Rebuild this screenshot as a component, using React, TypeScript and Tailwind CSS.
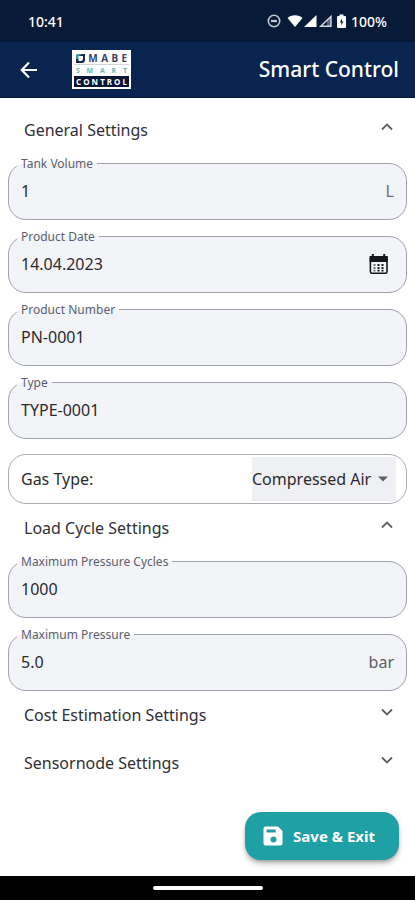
import React, { useState } from 'react';

const initialSections = {
  general: true,
  loadCycle: true,
  cost: false,
  sensornode: false,
};

type SectionKey = keyof typeof initialSections;

const StatusIcons = () => (
  <svg className="h-4 w-20" viewBox="0 0 80 16" fill="none" aria-hidden="true">
    {/* do not disturb */}
    <circle cx="7" cy="8" r="5.7" stroke="#c3c8d1" strokeWidth="1.6" />
    <path d="M4 8h6" stroke="#c3c8d1" strokeWidth="2.2" />
    {/* wifi */}
    <path d="M20.500 5C22.500 3 24.800 2.200 28 2.200S33.500 3 35.500 5L28 14z" fill="#fff" />
    {/* signal */}
    <path d="M49.500 2v12H37z" fill="#fff" />
    <path d="M64 3.500v9.800H53.700z" stroke="#d5d9e0" strokeWidth="1.400" />
    <path d="M60 7.500l4-4v9.800h-4z" fill="#d5d9e0" fillOpacity="0.400" />
    {/* battery */}
    <path d="M72.500 1.500h4V3H78a1 1 0 0 1 1 1v10a1 1 0 0 1-1 1h-7a1 1 0 0 1-1-1V4a1 1 0 0 1 1-1h1.500z" fill="#fff" />
    <path d="M75 5.500L72.800 9.200h1.500v3l2.200-3.800H75z" fill="#071b38" />
  </svg>
);

const BackIcon = () => (
  <svg className="h-6 w-6" viewBox="0 0 24 24" fill="none" stroke="#fff" strokeWidth="2.2" aria-hidden="true">
    <path d="M21 12H6M13 4.500L5.800 12l7.200 7.500" />
  </svg>
);

const ChevronIcon = ({ open }: { open: boolean }) => (
  <svg className="mb-1.5 h-6 w-6" viewBox="0 0 24 24" fill="none" stroke="#5f6166" strokeWidth="1.8" aria-hidden="true">
    <path d={open ? 'M7 14.500l5-5 5 5' : 'M7 9.500l5 5 5-5'} />
  </svg>
);

const CalendarIcon = () => (
  <svg className="h-6 w-6" viewBox="0 0 24 24" aria-hidden="true">
    <path d="M6.800 2v3M18.200 2v3" stroke="#16181d" strokeWidth="2" />
    <rect x="4.400" y="4.700" width="16.600" height="16.600" rx="1.500" fill="#f3f4f7" stroke="#16181d" strokeWidth="1.600" />
    <path d="M3.600 4h18.200v6H3.600z" fill="#16181d" />
    <g fill="#16181d">
      <path d="M11.500 12h2v2h-2zM15.500 12h2v2h-2zM11.500 14.900h2v2h-2zM15.500 14.900h2v2h-2zM11.500 17.700h2v1.700h-2zM15.500 17.700h2v1.700h-2z" />
      <path d="M7.500 12h2v2h-2zM7.500 14.900h2v2h-2zM7.500 17.700h2v1.700h-2z" fillOpacity="0.600" />
    </g>
  </svg>
);

const SaveIcon = () => (
  <svg className="h-6 w-6" viewBox="0 0 24 24" aria-hidden="true">
    <path
      d="M4.500 2.500H17L21.500 7V19.500a2 2 0 0 1-2 2h-15a2 2 0 0 1-2-2V4.500a2 2 0 0 1 2-2z"
      fill="#fff"
    />
    <path d="M5.500 5.500h9.200v3H5.500z" fill="#1fa0a5" />
    <circle cx="12.500" cy="15.500" r="3" fill="#1fa0a5" />
  </svg>
);

const LogoLine = ({ text }: { text: string }) => (
  <>
    {text.split('').map((letter, idx) => (
      <span key={idx}>{letter}</span>
    ))}
  </>
);

const Logo = () => (
  <div className="flex w-[59px] flex-col bg-white p-0.5 font-bold" role="img" aria-label="MABE Smart Control">
    <div className="flex h-3 items-center justify-between px-0.5 text-[10px] leading-3 text-[#3b4468]">
      <svg className="h-[9px] w-[9px]" viewBox="0 0 9 9" aria-hidden="true">
        <path d="M1.500 0H9v7L7 9H0V1.500z" fill="#172c52" />
        <path d="M0 5V1.500L1.500 0H6L3 2v3z" fill="#3a9a9c" />
        <path d="M2.500 2H7v3.500L5.500 7h-3z" fill="#fff" />
      </svg>
      <LogoLine text="MABE" />
    </div>
    <div className="flex h-3 items-center justify-between border-t border-gray-300 px-0.5 text-[7px] leading-3 text-[#68b9b5]">
      <LogoLine text="SMART" />
    </div>
    <div className="flex h-[11px] items-center justify-between bg-[#0b1538] px-0.5 text-[8px] leading-[11px] text-white">
      <LogoLine text="CONTROL" />
    </div>
  </div>
);

interface FieldProps {
  id: string;
  label: string;
  defaultValue: string;
  suffix?: React.ReactNode;
}

const Field = ({ id, label, defaultValue, suffix }: FieldProps) => (
  <fieldset className="h-16 min-w-0 rounded-[18px] border border-[#a0a3ad] bg-[#f3f4f7] pr-3 pl-2">
    <legend className="h-[15px] px-1 text-[12px] leading-[15px] text-[#5c5f70]">
      <label htmlFor={id}>{label}</label>
    </legend>
    <div className="flex h-10 items-center">
      <input
        id={id}
        type="text"
        defaultValue={defaultValue}
        className="h-10 min-w-0 flex-1 bg-transparent px-1 text-base text-[#2a2b30] outline-none"
      />
      {suffix}
    </div>
  </fieldset>
);

interface SectionProps {
  title: string;
  open: boolean;
  onToggle: () => void;
  children?: React.ReactNode;
}

const Section = ({ title, open, onToggle, children }: SectionProps) => (
  <section>
    <h2>
      <button
        type="button"
        aria-expanded={open}
        onClick={onToggle}
        className="flex h-12 w-full items-center justify-between pr-2 pl-4 text-base text-[#2f3035]"
      >
        {title}
        <ChevronIcon open={open} />
      </button>
    </h2>
    {open && children && <div className="flex flex-col gap-[9px] pt-0.5">{children}</div>}
  </section>
);

const App = () => {
  const [sections, setSections] = useState(initialSections);

  const toggle = (key: SectionKey) => {
    setSections((prev) => ({ ...prev, [key]: !prev[key] }));
  };

  return (
    <div className="flex min-h-screen flex-col bg-white font-['Noto_Sans',sans-serif]">
      <div className="flex h-[42px] items-center justify-between bg-[#071b38] pr-7 pl-7 text-[14px] font-medium text-white">
        <span>10:41</span>
        <div className="flex items-center gap-1">
          <StatusIcons />
          <span>100%</span>
        </div>
      </div>

      <header className="flex h-14 items-center border-b border-[#06153a] bg-[#08244f] pr-4 pl-4">
        <button type="button" aria-label="Back">
          <BackIcon />
        </button>
        <div className="ml-8 flex-1">
          <Logo />
        </div>
        <h1 className="text-[21px] font-medium text-white">Smart Control</h1>
      </header>

      <main className="flex flex-1 flex-col px-2 pt-2">
        <Section title="General Settings" open={sections.general} onToggle={() => toggle('general')}>
          <Field
            id="tank-volume"
            label="Tank Volume"
            defaultValue="1"
            suffix={<span className="text-base text-[#6d6f76]">L</span>}
          />
          <Field
            id="product-date"
            label="Product Date"
            defaultValue="14.04.2023"
            suffix={
              <button type="button" aria-label="Pick date" className="mr-1">
                <CalendarIcon />
              </button>
            }
          />
          <Field id="product-number" label="Product Number" defaultValue="PN-0001" />
          <Field id="type" label="Type" defaultValue="TYPE-0001" />

          <div className="mt-1.5 flex h-[50px] items-center justify-between rounded-[18px] border border-[#aaabb0] py-0.5 pr-2.5 pl-3">
            <label htmlFor="gas-type" className="text-base text-[#2a2b30]">
              Gas Type:
            </label>
            <div className="relative h-full">
              <select
                id="gas-type"
                defaultValue="Compressed Air"
                className="h-full w-36 appearance-none border-b border-[#e4e6eb] bg-[#eff0f4] text-base text-[#2a2b30] outline-none"
              >
                <option>Compressed Air</option>
                <option>Nitrogen</option>
                <option>Oxygen</option>
              </select>
              <svg
                className="pointer-events-none absolute inset-y-0 right-2 my-auto h-1.5 w-2.5"
                viewBox="0 0 10 6"
                aria-hidden="true"
              >
                <path d="M0 .5h10L5 5.500z" fill="#5f6166" />
              </svg>
            </div>
          </div>
        </Section>

        <Section title="Load Cycle Settings" open={sections.loadCycle} onToggle={() => toggle('loadCycle')}>
          <Field id="max-cycles" label="Maximum Pressure Cycles" defaultValue="1000" />
          <Field
            id="max-pressure"
            label="Maximum Pressure"
            defaultValue="5.0"
            suffix={<span className="text-base text-[#5c5e66]">bar</span>}
          />
        </Section>

        <Section title="Cost Estimation Settings" open={sections.cost} onToggle={() => toggle('cost')} />
        <Section title="Sensornode Settings" open={sections.sensornode} onToggle={() => toggle('sensornode')} />

        <div className="mt-auto flex justify-end pt-6 pr-2 pb-4">
          <button
            type="button"
            className="flex h-12 items-center gap-2 rounded-2xl bg-[#1fa0a5] pr-6 pl-4 text-[15px] font-bold text-white shadow-md shadow-black/30"
          >
            <SaveIcon />
            Save &amp; Exit
          </button>
        </div>
      </main>

      <div className="flex h-6 items-center justify-center bg-black">
        <div className="h-1 w-[110px] rounded-full bg-white" />
      </div>
    </div>
  );
};

export default App;
